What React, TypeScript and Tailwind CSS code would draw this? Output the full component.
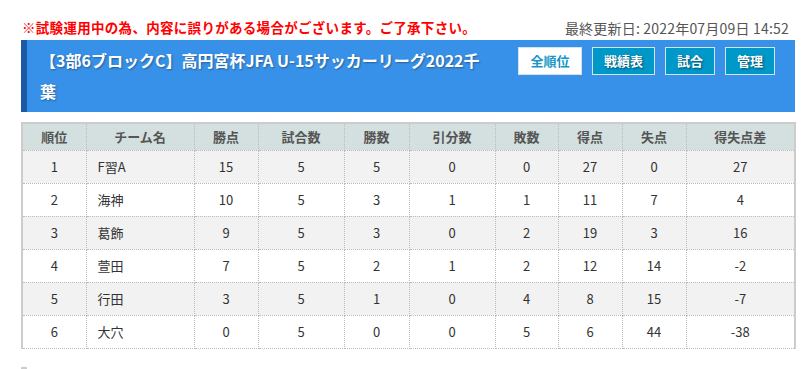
import React from 'react';

const rows = [
  { rank: 1, team: 'F習A', pts: 15, games: 5, win: 5, draw: 0, lose: 0, gf: 27, ga: 0, gd: 27 },
  { rank: 2, team: '海神', pts: 10, games: 5, win: 3, draw: 1, lose: 1, gf: 11, ga: 7, gd: 4 },
  { rank: 3, team: '葛飾', pts: 9, games: 5, win: 3, draw: 0, lose: 2, gf: 19, ga: 3, gd: 16 },
  { rank: 4, team: '萱田', pts: 7, games: 5, win: 2, draw: 1, lose: 2, gf: 12, ga: 14, gd: -2 },
  { rank: 5, team: '行田', pts: 3, games: 5, win: 1, draw: 0, lose: 4, gf: 8, ga: 15, gd: -7 },
  { rank: 6, team: '大穴', pts: 0, games: 5, win: 0, draw: 0, lose: 5, gf: 6, ga: 44, gd: -38 },
];

const heads = ['順位', 'チーム名', '勝点', '試合数', '勝数', '引分数', '敗数', '得点', '失点', '得失点差'];
const widths = [64, 108, 64, 86, 65, 86, 63, 64, 64, 109];

const App: React.FC = () => {
  return (
    <div className="w-[810px] h-[369px] overflow-hidden bg-white font-['Noto_Sans_CJK_JP',sans-serif] text-[#333]">
      {/* Notice + updated */}
      <div className="flex items-center justify-between pl-[22px] pr-[21px] pt-[15px] h-[40px]">
        <p className="text-[13.5px] font-bold text-[#ff0000] leading-none tracking-[0.3px]">
          ※試験運用中の為、内容に誤りがある場合がございます。ご了承下さい。
        </p>
        <p className="text-[14px] text-[#555] leading-none tracking-[0.2px]">最終更新日: 2022年07月09日 14:52</p>
      </div>

      {/* Header bar */}
      <div className="ml-[21px] w-[774px] h-[72px] flex items-start justify-between bg-[#3891e9] border-l-[6px] border-[#1b5ba6] pl-[13px] pr-[20px]">
        <h2 className="w-[452px] pt-[5px] text-[16px] font-bold leading-[31px] text-white [text-shadow:1px_1px_2px_rgba(0,0,0,0.35)]">
          【3部6ブロックC】高円宮杯JFA U-15サッカーリーグ2022千葉
        </h2>
        <div className="flex gap-[10px] mt-[7px]">
          <button className="w-[64px] h-[28px] bg-white border border-[#d5e3ee] text-[13px] font-bold text-[#1596c8]">
            全順位
          </button>
          <button className="w-[63px] h-[28px] bg-[#0097c9] border border-[#d5e3ee] text-[13px] font-bold text-white [text-shadow:1px_1px_2px_rgba(0,0,0,0.5)]">
            戦績表
          </button>
          <button className="w-[50px] h-[28px] bg-[#0097c9] border border-[#d5e3ee] text-[13px] font-bold text-white [text-shadow:1px_1px_2px_rgba(0,0,0,0.5)]">
            試合
          </button>
          <button className="w-[50px] h-[28px] bg-[#0097c9] border border-[#d5e3ee] text-[13px] font-bold text-white [text-shadow:1px_1px_2px_rgba(0,0,0,0.5)]">
            管理
          </button>
        </div>
      </div>

      {/* Standings table */}
      <table className="ml-[21px] mt-[10px] w-[773px] table-fixed border-collapse border-x-2 border-t-2 border-solid border-[#cccccc] text-[13px]">
        <colgroup>
          {widths.map((w, i) => (
            <col key={i} style={{ width: w }} />
          ))}
        </colgroup>
        <thead>
          <tr className="h-[27px] bg-[#d4e0e0]">
            {heads.map((h) => (
              <th key={h} className="border border-dotted border-[#bbbbbb] font-bold text-[#555] text-center">
                {h}
              </th>
            ))}
          </tr>
        </thead>
        <tbody>
          {rows.map((r, i) => (
            <tr key={r.rank} className={`h-[33px] ${i % 2 === 0 ? 'bg-[#f2f2f2]' : 'bg-white'}`}>
              <td className="border border-dotted border-[#bbbbbb] text-center">{r.rank}</td>
              <td className="border border-dotted border-[#bbbbbb] text-left pl-[11px]">{r.team}</td>
              <td className="border border-dotted border-[#bbbbbb] text-center">{r.pts}</td>
              <td className="border border-dotted border-[#bbbbbb] text-center">{r.games}</td>
              <td className="border border-dotted border-[#bbbbbb] text-center">{r.win}</td>
              <td className="border border-dotted border-[#bbbbbb] text-center">{r.draw}</td>
              <td className="border border-dotted border-[#bbbbbb] text-center">{r.lose}</td>
              <td className="border border-dotted border-[#bbbbbb] text-center">{r.gf}</td>
              <td className="border border-dotted border-[#bbbbbb] text-center">{r.ga}</td>
              <td className="border border-dotted border-[#bbbbbb] text-center">{r.gd}</td>
            </tr>
          ))}
        </tbody>
      </table>

      <div className="ml-[21px] mt-[18px] w-[6px] h-[2px] bg-[#cccccc]" />
    </div>
  );
};

export default App;
